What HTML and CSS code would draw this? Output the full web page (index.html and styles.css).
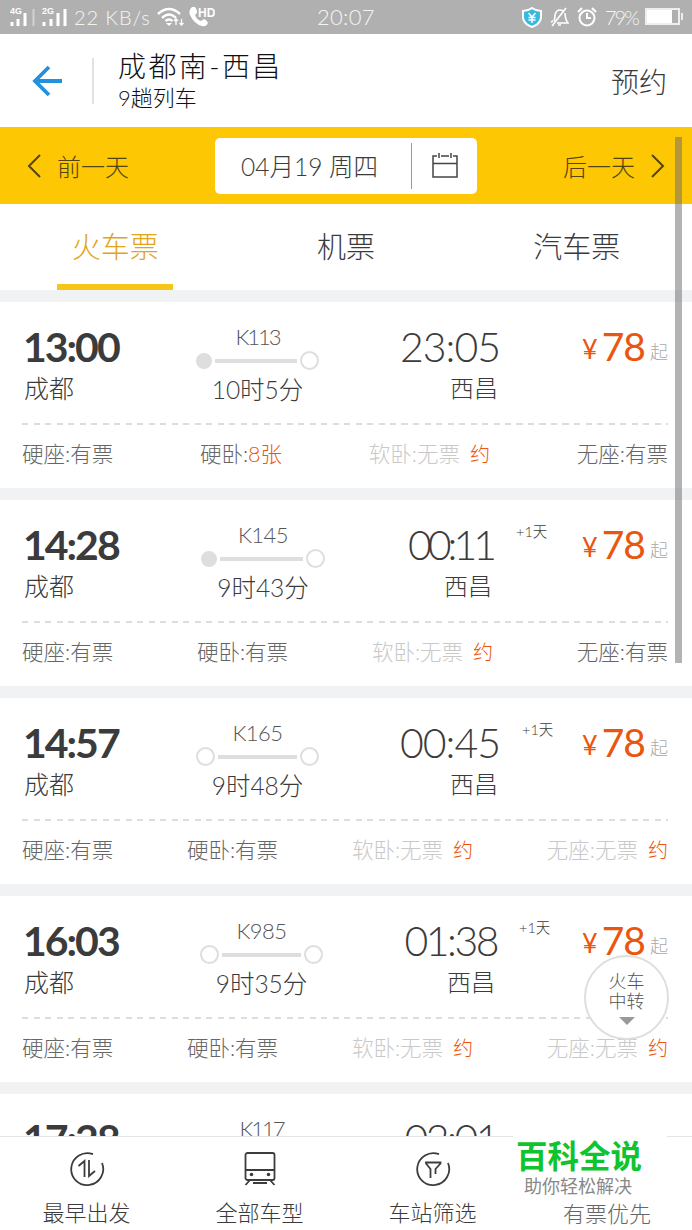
FILE: index.html
```html
<!DOCTYPE html>
<html lang="zh-CN">
<head>
<meta charset="utf-8">
<title>成都南-西昌</title>
<link rel="stylesheet" href="styles.css">
</head>
<body>
<div class="screen">
  <div class="status">
    <div class="status-left">
      <svg width="57" height="24" viewBox="0 0 57 24">
        <text x="0" y="9" class="gen">4G</text><path d="M2 17v4M8 14v7" stroke="#fff" stroke-width="3"/><path d="M15 8v13" stroke="#fff" stroke-width="3"/><path d="M23.500 4v17" stroke="#d2d2d2" stroke-width="2"/>
        <text x="32" y="9" class="gen">2G</text><path d="M34 17v4M41 14v7" stroke="#fff" stroke-width="3"/><path d="M48 8v13M55 4v17" stroke="#fff" stroke-width="3"/>
      </svg>
      <span class="speed">22 KB/s</span>
      <svg class="wifi" width="28" height="20" viewBox="0 0 28 20" fill="none" stroke="#fff" stroke-width="2.4"><path d="M1 7Q12-3 23 7M5 11Q12 4 19 11M8.500 14Q12 11 15.500 14"/><path d="M12 19l-3-3h6z" fill="#fff" stroke="none"/><path d="M19 18v-6m-2 2l2-2 2 2M24.500 12v6m-2-2l2 2 2-2" stroke-width="1.300"/></svg>
      <svg class="phone" width="26" height="22" viewBox="0 0 26 22"><path d="M3 1L6 1Q8 3 8 7L6 9Q8 14 12 15L15 13Q18 14 19 17Q17 21 13 20Q5 18 1 9Q-1 4 3 1Z" fill="#fff"/><text x="9" y="11" class="hd">HD</text></svg>
    </div>
    <span class="clock">20:07</span>
    <div class="status-right">
      <svg width="20" height="21" viewBox="0 0 20 21"><path d="M10 1Q14 4 19 4V11Q18 17 10 20Q2 17 1 11V4Q6 4 10 1Z" fill="#38b9df" stroke="#fff" stroke-width="2"/><path d="M6.500 6l3.500 4 3.500-4M10 10v6M6.500 10.500h7M6.500 13h7" fill="none" stroke="#fff" stroke-width="1.500"/></svg>
      <svg width="19" height="20" viewBox="0 0 19 20" fill="none" stroke="#fff" stroke-width="1.600"><path d="M4 14Q5 12 5 8Q6 3 10 3Q12 3 13 4M15 6Q15 12 18 16H7M1 15l2-1M8 18h3M16 1L2 19"/></svg>
      <svg width="20" height="20" viewBox="0 0 20 20" fill="none" stroke="#fff" stroke-width="2"><circle cx="10" cy="11" r="7.500"/><path d="M10 6v5h4M1 5l4-4M15 1l4 4"/></svg>
      <span class="percent">79%</span>
      <svg width="38" height="18" viewBox="0 0 38 18"><rect x="1" y="1" width="33" height="15" fill="none" stroke="#eee" stroke-width="2"/><rect x="2" y="2" width="25" height="13" fill="#fff"/><path d="M37 5v7" stroke="#eee" stroke-width="2"/></svg>
    </div>
  </div>

  <header class="header">
    <svg class="back" width="32" height="32" viewBox="0 0 32 32" fill="none" stroke="#2590dc" stroke-width="3.800"><path d="M18 2L4 16L18 30M4 16H31"/></svg>
    <div class="titles"><div class="title">成都南-西昌</div><div class="subtitle">9趟列车</div></div>
    <span class="reserve">预约</span>
  </header>

  <nav class="days">
    <span class="day prev"><svg width="14" height="24" viewBox="0 0 14 24" fill="none" stroke="#554310" stroke-width="2"><path d="M13 1L2 12L13 23"/></svg>前一天</span>
    <div class="date"><span class="date-text">04月19 周四</span><span class="date-icon"><svg width="26" height="26" viewBox="0 0 26 26" fill="none" stroke="#444" stroke-width="1.500"><path d="M5 3H1V24H25V3H21M9 3H17M1 10.500H25M7 0V5M19 0V5"/></svg></span></div>
    <span class="day next">后一天<svg width="14" height="24" viewBox="0 0 14 24" fill="none" stroke="#554310" stroke-width="2"><path d="M1 1L12 12L1 23"/></svg></span>
  </nav>

  <nav class="tabs"><span class="tab active">火车票</span><span class="tab">机票</span><span class="tab">汽车票</span></nav>

  <main class="list">
    <section class="card">
      <div class="trip trip-a">
        <div class="dep"><div class="time">13:00</div><div class="city">成都</div></div>
        <div class="route"><div class="train tight">K113</div><div class="track passed"><i></i><b></b><i></i></div><div class="duration">10时5分</div></div>
        <div class="arr"><div class="time">23:05</div><div class="city">西昌</div></div>
        <div class="price"><small>¥</small><span>78</span><em>起</em></div>
      </div>
      <div class="seats"><span>硬座:有票</span><span>硬卧:<b>8张</b></span><span class="none">软卧:无票<b class="book">约</b></span><span>无座:有票</span></div>
    </section>
    <section class="card">
      <div class="trip trip-b">
        <div class="dep"><div class="time">14:28</div><div class="city">成都</div></div>
        <div class="route"><div class="train">K145</div><div class="track passed"><i></i><b></b><i></i></div><div class="duration">9时43分</div></div>
        <div class="arr"><div class="time narrow">00:11</div><div class="city">西昌</div><span class="plus">+1天</span></div>
        <div class="price"><small>¥</small><span>78</span><em>起</em></div>
      </div>
      <div class="seats"><span>硬座:有票</span><span>硬卧:有票</span><span class="none">软卧:无票<b class="book">约</b></span><span>无座:有票</span></div>
    </section>
    <section class="card">
      <div class="trip trip-a">
        <div class="dep"><div class="time">14:57</div><div class="city">成都</div></div>
        <div class="route"><div class="train">K165</div><div class="track"><i></i><b></b><i></i></div><div class="duration">9时48分</div></div>
        <div class="arr"><div class="time">00:45</div><div class="city">西昌</div><span class="plus">+1天</span></div>
        <div class="price"><small>¥</small><span>78</span><em>起</em></div>
      </div>
      <div class="seats"><span>硬座:有票</span><span>硬卧:有票</span><span class="none">软卧:无票<b class="book">约</b></span><span class="none">无座:无票<b class="book">约</b></span></div>
    </section>
    <section class="card">
      <div class="trip trip-c">
        <div class="dep"><div class="time">16:03</div><div class="city">成都</div></div>
        <div class="route"><div class="train">K985</div><div class="track"><i></i><b></b><i></i></div><div class="duration">9时35分</div></div>
        <div class="arr"><div class="time semi">01:38</div><div class="city">西昌</div><span class="plus">+1天</span></div>
        <div class="price"><small>¥</small><span>78</span><em>起</em></div>
      </div>
      <div class="seats"><span>硬座:有票</span><span>硬卧:有票</span><span class="none">软卧:无票<b class="book">约</b></span><span class="none">无座:无票<b class="book">约</b></span></div>
    </section>
    <section class="card">
      <div class="trip trip-c">
        <div class="dep"><div class="time">17:28</div></div>
        <div class="route"><div class="train tight">K117</div></div>
        <div class="arr"><div class="time semi">02:01</div></div>
      </div>
    </section>
  </main>

  <div class="scrollbar"></div>
  <div class="transfer"><span>火车</span><span>中转</span><i></i></div>

  <footer class="filters">
    <span class="filter"><svg width="36" height="36" viewBox="0 0 36 36" fill="none" stroke="#3c3c3c" stroke-width="1.800"><path d="M24 3.200A16 16 0 1 0 33 12"/><path d="M9.500 15L15.500 10V26M20 9V25L26 20"/></svg>最早出发</span>
    <span class="filter"><svg width="36" height="36" viewBox="0 0 36 36" fill="none" stroke="#3c3c3c" stroke-width="1.800"><rect x="3.500" y="2" width="29" height="27" rx="2"/><path d="M3.500 19H32.500M8 29L3.500 34M28 29L32.500 34M11 32H25"/><g fill="#3c3c3c" stroke="none"><circle cx="9.500" cy="23.500" r="1.800"/><circle cx="26.500" cy="23.500" r="1.800"/></g></svg>全部车型</span>
    <span class="filter"><svg width="36" height="36" viewBox="0 0 36 36" fill="none" stroke="#3c3c3c" stroke-width="1.800"><path d="M24 3.200A16 16 0 1 0 33 12"/><path d="M15.500 27V18L11 12.500V11.500H25.500V12.500L20.500 18V23"/></svg>车站筛选</span>
    <span class="filter last">有票优先</span>
  </footer>
  <div class="mark"><div class="mark-name">百科全说</div><div class="mark-line">助你轻松解决</div></div>
</div>
</body>
</html>
```

FILE: styles.css
```css
* { box-sizing: border-box; }
body { margin: 0; background: #fff; }
svg { display: block; flex: none; }
i, em, b { font-style: normal; font-weight: inherit; }
.screen {
  position: relative; width: 692px; height: 1230px; overflow: hidden;
  background: #fff; color: #3b3b3b;
  font-family: Lato, "Noto Sans CJK SC", sans-serif; font-weight: 300;
  white-space: nowrap;
}

/* status bar */
.status { height: 34px; background: #b0b0b0; color: #f4f4f4; display: grid; grid-template-columns: 317px 1fr 170px; align-items: center; line-height: 34px; }
.status-left { display: flex; align-items: center; padding-left: 10px; }
.gen { font: bold 9px "Liberation Sans", sans-serif; fill: #fff; }
.hd { font: bold 12px "Liberation Sans", sans-serif; fill: #fff; }
.speed { font-size: 20px; letter-spacing: .9px; margin-left: 7px; width: 83px; }
.phone { margin-left: 4px; }
.clock { font-size: 22px; letter-spacing: .3px; }
.status-right { display: flex; align-items: center; gap: 8px; }
.percent { font-size: 20px; letter-spacing: -2px; width: 32px; }

/* header */
.header { height: 93px; display: flex; align-items: center; padding: 0 25px 0 31px; }
.titles { margin-left: 29px; border-left: 2px solid #e2e2e2; height: 46px; padding-left: 24px; display: flex; flex-direction: column; justify-content: center; color: #111; }
.title { font-size: 28px; line-height: 34px; letter-spacing: 2.4px; }
.subtitle { font-size: 22px; line-height: 30px; }
.reserve { margin-left: auto; font-size: 28px; }

/* day switcher */
.days { height: 77px; background: #fdc704; display: flex; align-items: center; justify-content: space-between; padding: 0 27px; }
.day { display: flex; align-items: center; gap: 16px; font-size: 24px; color: #554310; width: 188px; }
.day.next { justify-content: flex-end; }
.date { flex: none; width: 262px; height: 56px; background: #fff; border-radius: 5px; display: flex; align-items: center; }
.date-text { width: 196px; padding-left: 26px; font-size: 24.5px; }
.date-icon { height: 46px; border-left: 1px solid #999; flex: 1; display: flex; align-items: center; justify-content: center; }

/* tabs */
.tabs { height: 86px; display: grid; grid-template-columns: repeat(3, 1fr); }
.tab { justify-self: center; width: 116px; height: 86px; text-align: center; font-size: 29px; line-height: 86px; }
.tab.active { color: #e0a51a; border-bottom: 6px solid #f5c618; }

/* train cards */
.list { background: #f1f2f4; padding-top: 12px; display: flex; flex-direction: column; gap: 12px; }
.card { height: 186px; flex: none; background: #fff; padding: 0 24px 0 22px; }
.trip { display: grid; height: 121px; }
.trip-a { grid-template-columns: 174px 123px 181px 1fr; }
.trip-b { grid-template-columns: 179px 124px 169px 1fr; }
.trip-c { grid-template-columns: 178px 123px 174px 1fr; }
.dep, .arr { padding-top: 23px; }
.time { font-size: 41px; line-height: 44px; letter-spacing: -1px; font-weight: 400; }
.arr .time { font-weight: 300; }
.arr .time.narrow { letter-spacing: -4px; padding-right: 1px; }
.arr .time.semi { letter-spacing: -2.5px; }
.dep .time { font-weight: 700; letter-spacing: -2px; padding-left: 1px; }
.city { font-size: 25px; line-height: 38px; }
.dep .city { padding-left: 2px; }
.arr { position: relative; text-align: right; }
.arr .city { font-size: 24px; padding-right: 2px; }
.plus { position: absolute; left: calc(100% + 22px); top: 22px; font-size: 14.5px; line-height: 20px; }
.route { padding-top: 21px; text-align: center; }
.train { font-size: 22px; line-height: 28px; color: #555; letter-spacing: -.5px; }
.train.tight { letter-spacing: -2px; }
.track { height: 19px; display: flex; align-items: center; gap: 3px; }
.track i { width: 19px; height: 19px; border: 2px solid #dedede; border-radius: 50%; }
.track b { height: 4px; background: #dedede; flex: 1; }
.track.passed i:first-child { width: 16px; height: 16px; background: #dedede; }
.duration { font-size: 24.5px; line-height: 40px; }
.price { display: flex; align-items: baseline; justify-content: flex-end; padding-top: 22px; height: 66px; line-height: 44px; color: #ea560f; }
.price small { font-size: 27px; font-weight: 400; margin-right: 4px; position: relative; top: -2px; }
.price span { font-size: 39px; font-weight: 400; letter-spacing: -1px; }
.price em { font-size: 18px; color: #aaa; margin-left: 5px; position: relative; top: -2px; }
.seats { height: 65px; line-height: 63px; display: flex; justify-content: space-between; font-size: 21.5px; color: #666; background: repeating-linear-gradient(90deg, #ddd 0 6px, transparent 6px 11.5px) 0 0 / 100% 2px no-repeat; }
.seats b { color: #ea560f; }
.seats .none { color: #c9c9c9; }
.seats .book { font-size: 20px; margin-left: 10px; }

/* overlays */
.scrollbar { position: absolute; left: 675px; top: 137px; width: 7px; height: 526px; background: rgba(110, 110, 110, .52); }
.transfer { position: absolute; left: 584px; top: 955px; width: 85px; height: 85px; border: 2px solid #dedede; border-radius: 50%; background: rgba(255, 255, 255, .95); display: flex; flex-direction: column; align-items: center; padding-top: 14px; font-size: 18px; line-height: 20px; color: #555; }
.transfer i { border: 8px solid transparent; border-top-color: #999; border-bottom: 0; margin-top: 6px; }
.filters { position: absolute; left: 0; right: 0; bottom: 0; height: 94px; border-top: 1px solid #e4e4e4; background: #fff; display: grid; grid-template-columns: repeat(4, 1fr); }
.filter { display: flex; flex-direction: column; align-items: center; gap: 11px; padding-top: 14px; font-size: 22px; line-height: 30px; }
.filter.last { padding: 62px 0 0 3px; color: #666; }
.mark { position: absolute; left: 513px; top: 1121px; width: 154px; height: 80px; background: #fff; padding: 13px 0 0 3px; font-family: "Noto Sans CJK SC", sans-serif; }
.mark-name { font-size: 31.5px; line-height: 41px; font-weight: 700; color: #0fc42e; }
.mark-line { font-size: 18px; line-height: 20px; color: #888; padding-left: 8px; font-weight: 400; }
```
